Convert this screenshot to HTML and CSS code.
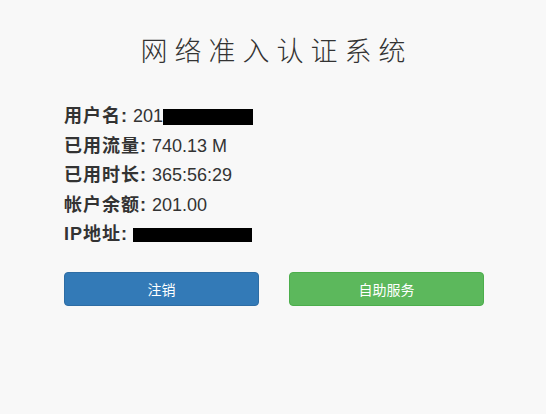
FILE: index.html
```html
<!DOCTYPE html>
<html lang="zh-CN">
<head>
<meta charset="utf-8">
<title>网络准入认证系统</title>
<link rel="stylesheet" href="styles.css">
</head>
<body>
<div class="page">
  <h1 class="title">网络准入认证系统</h1>
  <div class="info">
    <p class="line"><b>用户名:</b> 201<span class="redact redact-user"></span></p>
    <p class="line"><b>已用流量:</b> 740.13 M</p>
    <p class="line"><b>已用时长:</b> 365:56:29</p>
    <p class="line"><b>帐户余额:</b> 201.00</p>
    <p class="line"><b>IP地址:</b> <span class="redact redact-ip"></span></p>
  </div>
  <div class="actions">
    <button class="btn btn-primary">注销</button>
    <button class="btn btn-success">自助服务</button>
  </div>
</div>
</body>
</html>
```
FILE: styles.css
```css
html, body {
  margin: 0;
  padding: 0;
  background: #f8f8f8;
}
body {
  font-family: "Liberation Sans", "Noto Sans CJK SC", sans-serif;
  color: #333;
}
.page {
  width: 420px;
  margin-left: 64px;
  padding-top: 30px;
}
.title {
  margin: 0;
  font-family: "Noto Sans CJK SC", sans-serif;
  font-weight: 300;
  font-size: 27px;
  line-height: 40px;
  letter-spacing: 7px;
  padding-left: 5px;
  text-align: center;
  color: #333;
}
.info {
  margin-top: 32px;
}
.line {
  margin: 0;
  font-size: 18px;
  line-height: 29.5px;
  white-space: nowrap;
}
.line b {
  font-weight: bold;
  letter-spacing: 1px;
}
.redact {
  display: inline-block;
  background: #000;
  vertical-align: middle;
}
.redact-user {
  width: 90px;
  height: 16px;
}
.redact-ip {
  width: 119px;
  height: 14px;
}
.actions {
  display: grid;
  grid-template-columns: 1fr 1fr;
  column-gap: 30px;
  margin-top: 22px;
}
.btn {
  height: 34px;
  border-radius: 4px;
  border: 1px solid transparent;
  color: #fff;
  font-family: "Liberation Sans", "Noto Sans CJK SC", sans-serif;
  font-size: 14px;
  padding: 0;
}
.btn-primary {
  background: #337ab7;
  border-color: #2e6da4;
}
.btn-success {
  background: #5cb85c;
  border-color: #4cae4c;
}
```
